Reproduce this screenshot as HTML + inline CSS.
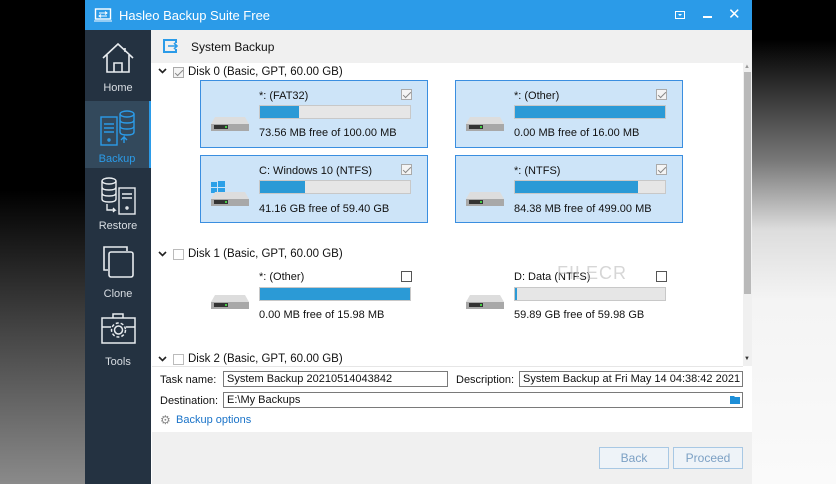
<!DOCTYPE html>
<html><head><meta charset="utf-8"><style>
*{margin:0;padding:0;box-sizing:border-box}
body{width:836px;height:484px;overflow:hidden;position:relative;font-family:"Liberation Sans",sans-serif;font-size:11px;color:#111;background:#000}
.bgl{position:absolute;left:0;top:0;width:85px;height:484px;background:linear-gradient(#000 0,#000 190px,#444 330px,#8a8a8a 484px)}
.bgr{position:absolute;left:752px;top:0;width:84px;height:484px;background:linear-gradient(#000 0,#000 40px,#777 160px,#ddd 230px,#f4f4f4 300px,#fafafa 484px)}
.win{position:absolute;left:85px;top:0;width:667px;height:484px;background:#fff}
.title{position:absolute;left:0;top:0;width:667px;height:30px;background:#2b9be8;color:#fff;font-size:13px}
.side{position:absolute;left:0;top:30px;width:66px;height:454px;background:#243241}
.nav{position:absolute;left:0;width:66px;height:67px;color:#d8dde2;font-size:11px;text-align:center}
.nav span{position:absolute;left:0;right:0;bottom:3px}
.abs{position:absolute}
.card{position:absolute;width:228px;height:68px;background:#cde4f8;border:1px solid #3a8ee0}
.bar{position:absolute;left:58px;top:24px;width:152px;height:14px;background:#e6e6e6;border:1px solid #c8c8c8}
.bar i{display:block;height:100%;background:#2b9ad6}
.cb{position:absolute;width:11px;height:11px;border:1px solid #999;background:#fff}
.cbc{border-color:#aaa;background:#f4f4f4}
.cbc:after{content:"";position:absolute;left:3px;top:0px;width:3px;height:7px;border:solid #888;border-width:0 1.5px 1.5px 0;transform:rotate(45deg)}
.lbl{position:absolute;left:58px;font-size:11px}
.inp{position:absolute;height:16px;border:1px solid #7a7a7a;background:#fff;font-size:11px;padding-left:3px;line-height:14px}
.btn{position:absolute;top:447px;width:70px;height:22px;border:1px solid #a8c8e4;background:#eef3f8;color:#7ca0c4;font-size:12px;text-align:center;line-height:20px}
.chev{position:absolute}
</style></head><body>
<div class="bgl"></div><div class="bgr"></div>
<div class="win">
<div class="title">
<svg class="abs" style="left:9px;top:8px" width="18" height="14"><rect x="1.5" y="1" width="15" height="10" fill="none" stroke="#fff" stroke-width="1.4"/><path d="M0 13h18M5 5h8M11 3.5l2 1.5-2 1.5M13 8H5M7 6.5L5 8l2 1.5" stroke="#fff" fill="none"/></svg>
<div class="abs" style="left:34px;top:8px">Hasleo Backup Suite Free</div>
<svg class="abs" style="left:590px;top:11px" width="10" height="8"><rect x=".5" y=".5" width="9" height="7" fill="none" stroke="#fff"/><path d="M3 3h4L5 5z" fill="#fff"/></svg>
<div class="abs" style="left:618px;top:16px;width:9px;height:2px;background:#fff"></div>
<div class="abs" style="left:643px;top:5px;font-size:15px">✕</div>
</div>
<div class="side">
<div class="nav" style="top:0">
<svg class="abs" style="left:16px;top:11px" width="34" height="34" fill="none" stroke="#e8ecef" stroke-width="1.6"><path d="M2 17L17 3l15 14M6 14v17h22V14M13 31v-9h8v9M24 7v4"/></svg><span>Home</span></div>
<div class="nav" style="top:71px;background:#33495c;border-right:2px solid #2b9be8;color:#2b9be8">
<svg class="abs" style="left:14px;top:8px" width="38" height="40" fill="none" stroke="#2b9be8" stroke-width="1.4"><rect x="2" y="8" width="16" height="28"/><path d="M5 15h10M5 19h10M5 23h10"/><circle cx="10" cy="31" r="1"/><ellipse cx="28" cy="5" rx="7" ry="3"/><path d="M21 5v18c0 2 3 3 7 3s7-1 7-3V5M21 11c0 2 3 3 7 3s7-1 7-3M21 17c0 2 3 3 7 3s7-1 7-3M25 34v-6l-3 3M25 28l3 3"/></svg><span>Backup</span></div>
<div class="nav" style="top:138px">
<svg class="abs" style="left:14px;top:8px" width="38" height="40" fill="none" stroke="#e8ecef" stroke-width="1.4"><ellipse cx="10" cy="5" rx="7" ry="3"/><path d="M3 5v18c0 2 3 3 7 3s7-1 7-3V5M3 11c0 2 3 3 7 3s7-1 7-3M3 17c0 2 3 3 7 3s7-1 7-3"/><rect x="20" y="12" width="16" height="26"/><path d="M23 18h10M23 22h10"/><circle cx="28" cy="32" r="1"/><path d="M8 28v6h8l-2-2M16 34l-2 2"/></svg><span>Restore</span></div>
<div class="nav" style="top:206px">
<svg class="abs" style="left:16px;top:8px" width="36" height="36" fill="none" stroke="#e8ecef" stroke-width="1.6"><path d="M7 26H3V3h23v4"/><rect x="8" y="8" width="24" height="25" rx="2"/></svg><span>Clone</span></div>
<div class="nav" style="top:274px">
<svg class="abs" style="left:16px;top:8px" width="36" height="34" fill="none" stroke="#e8ecef" stroke-width="1.5"><path d="M12 6V2h10v4"/><rect x="1" y="6" width="33" height="25"/><path d="M1 15h9M25 15h9"/><circle cx="17.5" cy="18" r="4"/><circle cx="17.5" cy="18" r="7" stroke-dasharray="3 2"/></svg><span>Tools</span></div>
</div>
<div class="abs" style="left:66px;top:30px;width:601px;height:33px;background:#f0f0f0"></div>
<svg class="abs" style="left:78px;top:39px" width="16" height="14"><rect x="1" y="1" width="12" height="12" fill="none" stroke="#2b9be8" stroke-width="2"/><rect x="6" y="4" width="10" height="6" fill="#f0f0f0"/><path d="M5 7h9M11 4l3 3-3 3" stroke="#2b9be8" stroke-width="1.6" fill="none"/></svg>
<div class="abs" style="left:106px;top:40px;font-size:12px">System Backup</div>
<div class="abs" style="left:658px;top:63px;width:9px;height:303px;background:#f0f0f0"></div>
<div class="abs" style="left:659px;top:72px;width:7px;height:222px;background:#b9b9b9"></div>
<div class="abs" style="left:659px;top:64px;font-size:6px;color:#999">▲</div>
<div class="abs" style="left:659px;top:356px;font-size:6px;color:#333">▼</div>
<svg class="chev" style="left:73px;top:68px" width="9" height="6"><path d="M1 1l3.5 3.5L8 1" stroke="#222" stroke-width="1.6" fill="none"/></svg>
<div class="cb cbc" style="left:88px;top:67px"></div>
<div class="abs" style="left:103px;top:66px;font-size:11.5px">Disk 0 (Basic, GPT, 60.00 GB)</div>
</div>
<div class="card" style="left:200px;top:80px"><div class="lbl" style="top:9px">*: (FAT32)</div><div class="cb cbc" style="left:200px;top:8px"></div><div class="bar"><i style="width:26%"></i></div><div class="lbl" style="top:46px">73.56 MB free of 100.00 MB</div><svg class="abs" style="left:10px;top:34px" width="38" height="18"><path d="M4 2h30l4 7v6H0V9z" fill="#ddd"/><path d="M0 9h38v7H0z" fill="#a8a8a8"/><rect x="3" y="10" width="14" height="4" fill="#333"/><rect x="14" y="11" width="2" height="2" fill="#4c4"/></svg></div>
<div class="card" style="left:455px;top:80px"><div class="lbl" style="top:9px">*: (Other)</div><div class="cb cbc" style="left:200px;top:8px"></div><div class="bar"><i style="width:100%"></i></div><div class="lbl" style="top:46px">0.00 MB free of 16.00 MB</div><svg class="abs" style="left:10px;top:34px" width="38" height="18"><path d="M4 2h30l4 7v6H0V9z" fill="#ddd"/><path d="M0 9h38v7H0z" fill="#a8a8a8"/><rect x="3" y="10" width="14" height="4" fill="#333"/><rect x="14" y="11" width="2" height="2" fill="#4c4"/></svg></div>
<div class="card" style="left:200px;top:155px"><div class="lbl" style="top:9px">C: Windows 10 (NTFS)</div><div class="cb cbc" style="left:200px;top:8px"></div><div class="bar"><i style="width:30%"></i></div><div class="lbl" style="top:47px">41.16 GB free of 59.40 GB</div><svg class="abs" style="left:10px;top:25px" width="16" height="14" fill="#2ba0e8"><rect x="0" y="1" width="6" height="5"/><rect x="7" y="0" width="7" height="6"/><rect x="0" y="7" width="6" height="5"/><rect x="7" y="7" width="7" height="6"/></svg><svg class="abs" style="left:10px;top:34px" width="38" height="18"><path d="M4 2h30l4 7v6H0V9z" fill="#ddd"/><path d="M0 9h38v7H0z" fill="#a8a8a8"/><rect x="3" y="10" width="14" height="4" fill="#333"/><rect x="14" y="11" width="2" height="2" fill="#4c4"/></svg></div>
<div class="card" style="left:455px;top:155px"><div class="lbl" style="top:9px">*: (NTFS)</div><div class="cb cbc" style="left:200px;top:8px"></div><div class="bar"><i style="width:82%"></i></div><div class="lbl" style="top:47px">84.38 MB free of 499.00 MB</div><svg class="abs" style="left:10px;top:34px" width="38" height="18"><path d="M4 2h30l4 7v6H0V9z" fill="#ddd"/><path d="M0 9h38v7H0z" fill="#a8a8a8"/><rect x="3" y="10" width="14" height="4" fill="#333"/><rect x="14" y="11" width="2" height="2" fill="#4c4"/></svg></div>
<svg class="chev" style="left:158px;top:251px" width="9" height="6"><path d="M1 1l3.5 3.5L8 1" stroke="#222" stroke-width="1.6" fill="none"/></svg>
<div class="cb" style="left:173px;top:249px;border-color:#bbb"></div>
<div class="abs" style="left:188px;top:248px;font-size:11.5px">Disk 1 (Basic, GPT, 60.00 GB)</div>
<div class="card" style="left:200px;top:262px;background:#fff;border-color:#fff"><div class="lbl" style="top:8px">*: (Other)</div><div class="cb" style="left:200px;top:8px;border-color:#555"></div><div class="bar"><i style="width:100%"></i></div><div class="lbl" style="top:46px">0.00 MB free of 15.98 MB</div><svg class="abs" style="left:10px;top:30px" width="38" height="18"><path d="M4 2h30l4 7v6H0V9z" fill="#ddd"/><path d="M0 9h38v7H0z" fill="#a8a8a8"/><rect x="3" y="10" width="14" height="4" fill="#333"/><rect x="14" y="11" width="2" height="2" fill="#4c4"/></svg></div>
<div class="card" style="left:455px;top:262px;background:#fff;border-color:#fff"><div class="lbl" style="top:8px">D: Data (NTFS)</div><div class="cb" style="left:200px;top:8px;border-color:#555"></div><div class="bar"><i style="width:1%"></i></div><div class="lbl" style="top:46px">59.89 GB free of 59.98 GB</div><svg class="abs" style="left:10px;top:30px" width="38" height="18"><path d="M4 2h30l4 7v6H0V9z" fill="#ddd"/><path d="M0 9h38v7H0z" fill="#a8a8a8"/><rect x="3" y="10" width="14" height="4" fill="#333"/><rect x="14" y="11" width="2" height="2" fill="#4c4"/></svg></div>
<div class="abs" style="left:557px;top:263px;font-size:18px;color:#bbb;opacity:.6;letter-spacing:1px">FILECR</div>
<svg class="chev" style="left:158px;top:356px" width="9" height="6"><path d="M1 1l3.5 3.5L8 1" stroke="#222" stroke-width="1.6" fill="none"/></svg>
<div class="cb" style="left:173px;top:354px;border-color:#bbb"></div>
<div class="abs" style="left:188px;top:353px;font-size:11.5px">Disk 2 (Basic, GPT, 60.00 GB)</div>
<div class="abs" style="left:152px;top:366px;width:591px;height:66px;background:#fff;border-top:1px solid #e6e6e6"></div>
<div class="abs" style="left:160px;top:374px">Task name:</div>
<div class="inp" style="left:223px;top:371px;width:225px">System Backup 20210514043842</div>
<div class="abs" style="left:456px;top:374px">Description:</div>
<div class="inp" style="left:519px;top:371px;width:224px">System Backup at Fri May 14 04:38:42 2021</div>
<div class="abs" style="left:160px;top:395px">Destination:</div>
<div class="inp" style="left:223px;top:392px;width:520px">E:\My Backups</div>
<svg class="abs" style="left:730px;top:395px" width="11" height="9"><path d="M0 1h4l1 1h5v7H0z" fill="#1e8fd8"/></svg>
<div class="abs" style="left:160px;top:413px;color:#888;font-size:12px">⚙</div>
<div class="abs" style="left:176px;top:414px;color:#1a73c8">Backup options</div>
<div class="abs" style="left:152px;top:432px;width:600px;height:52px;background:#f0f0f0"></div>
<div class="btn" style="left:599px">Back</div>
<div class="btn" style="left:673px">Proceed</div>
</body></html>
